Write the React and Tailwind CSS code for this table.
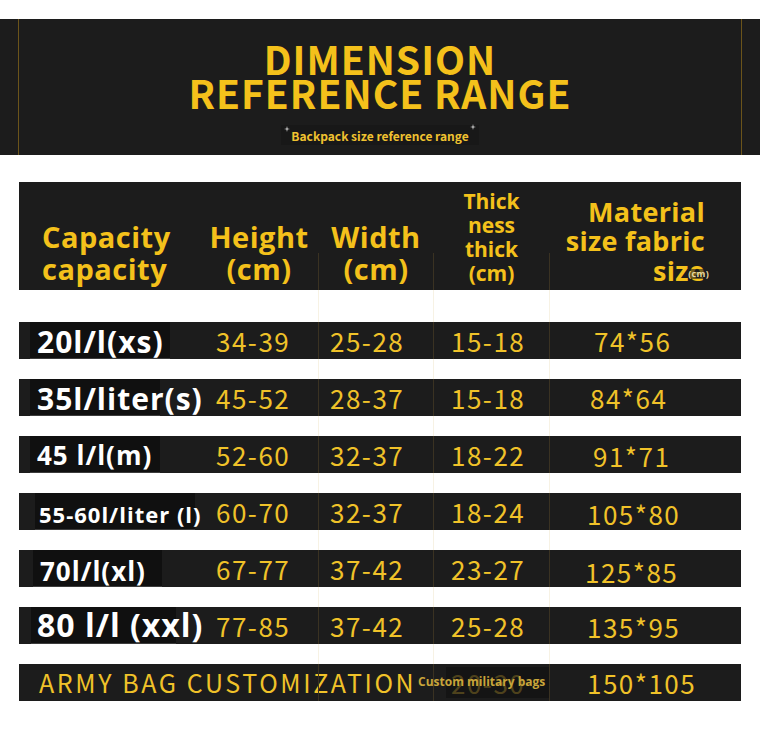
const rows = [
    { label: '20l/l(xs)', text: 'text-[30px]', box: 'ml-[11px] w-[140px]', pad: 'pl-[7px]', dy: 'translate-y-[2px]', h: '34-39', w: '25-28', t: '15-18', m: '74*56', mp: 'pl-[44px]', mdy: '' },
    { label: '35l/liter(s)', text: 'text-[30px]', box: 'ml-[11px] w-[130px]', pad: 'pl-[7px]', dy: 'translate-y-[2px]', h: '45-52', w: '28-37', t: '15-18', m: '84*64', mp: 'pl-[40px]', mdy: '' },
    { label: '45 l/l(m)', text: 'text-[26px]', box: 'ml-[11px] w-[130px]', pad: 'pl-[7px]', dy: 'translate-y-[1px]', h: '52-60', w: '32-37', t: '18-22', m: '91*71', mp: 'pl-[43px]', mdy: 'translate-y-[1px]' },
    { label: '55-60l/liter (l)', text: 'text-[22px]', box: 'ml-[16px] w-[160px]', pad: 'pl-[4px]', dy: 'translate-y-[3px]', h: '60-70', w: '32-37', t: '18-24', m: '105*80', mp: 'pl-[37px]', mdy: 'translate-y-[2px]' },
    { label: '70l/l(xl)', text: 'text-[26px]', box: 'ml-[14px] w-[129px]', pad: 'pl-[7px]', dy: 'translate-y-[3px]', h: '67-77', w: '37-42', t: '23-27', m: '125*85', mp: 'pl-[35px]', mdy: 'translate-y-[3px]' },
    { label: '80 l/l (xxl)', text: 'text-[32px]', box: 'ml-[12px] w-[145px]', pad: 'pl-[6px]', dy: 'translate-y-[0px]', h: '77-85', w: '37-42', t: '25-28', m: '135*95', mp: 'pl-[37px]', mdy: 'translate-y-[1px]' },
]

const num = "font-['Noto_Sans_CJK_SC',sans-serif] text-[26px] tracking-[1.5px] text-[#f0c229] whitespace-nowrap"
const open = "font-['Open_Sans',sans-serif] font-bold"

function Spacer({ h }) {
    return (
        <div className={`flex ${h}`}>
            <div className="w-[299px]" />
            <div className="w-[115px] border-l border-[#f7f2e4]" />
            <div className="w-[116px] border-l border-[#f7f2e4]" />
            <div className="w-[192px] border-l border-[#f7f2e4]" />
        </div>
    )
}

function Sparkle({ className }) {
    return (
        <svg viewBox="0 0 10 10" className={className}>
            <path d="M5 0 L6 4 L10 5 L6 6 L5 10 L4 6 L0 5 L4 4 Z" fill="#cfcfcf" />
        </svg>
    )
}

export default function App() {
    return (
        <div className="w-[760px] h-[729px] overflow-hidden bg-white pt-[19px]">
            {/* Title band */}
            <div className="h-[136px] bg-[#1c1c1c] px-[18px]">
                <div className="h-full border-x border-[#6b541a] flex flex-col items-center pt-[22px]">
                    <h1 className="font-['Noto_Sans_CJK_SC',sans-serif] font-bold text-[39px] leading-[34px] tracking-[1px] text-[#f4c11b] text-center">
                        <span className="block">DIMENSION</span>
                        <span className="block">REFERENCE RANGE</span>
                    </h1>
                    <div className="mt-[16px] flex items-start gap-[1px] bg-[#181818] px-[3px]">
                        <Sparkle className="w-[6px] h-[6px] mt-[1px]" />
                        <span className="font-['Noto_Sans_CJK_SC',sans-serif] font-bold text-[12px] leading-[18px] text-[#f0c230] pt-[2px]">
                            Backpack size reference range
                        </span>
                        <Sparkle className="w-[6px] h-[6px] -mt-[1px]" />
                    </div>
                </div>
            </div>

            <div className="mt-[27px] ml-[19px] w-[722px]">
                {/* Table header */}
                <div className={`h-[108px] bg-[#1c1c1c] flex text-[#f4c11b] ${open}`}>
                    <div className="w-[181px] flex items-end pb-[5px] pl-[23px]">
                        <div className="text-[29px] leading-[32px] tracking-[0.5px]">Capacity<br />capacity</div>
                    </div>
                    <div className="w-[118px] flex items-end justify-center pb-[5px]">
                        <div className="text-[29px] leading-[32px] tracking-[0.5px] text-center">Height<br />(cm)</div>
                    </div>
                    <div className="w-[115px] flex">
                        <div className="w-px h-[37px] self-end bg-[#3a3222]" />
                        <div className="flex-1 flex items-end justify-center pb-[5px]">
                            <div className="text-[29px] leading-[32px] tracking-[0.5px] text-center">Width<br />(cm)</div>
                        </div>
                    </div>
                    <div className="w-[116px] flex">
                        <div className="w-px h-[37px] self-end bg-[#3a3222]" />
                        <div className="flex-1 flex items-end justify-center pb-[5px]">
                            <div className="text-[21px] leading-[24px] text-center">Thick<br />ness<br />thick<br />(cm)</div>
                        </div>
                    </div>
                    <div className="w-[192px] flex">
                        <div className="w-px h-[37px] self-end bg-[#3a3222]" />
                        <div className="flex-1 flex items-end justify-end pr-[36px] pb-[5px]">
                            <div className="relative text-[27px] leading-[29.5px] tracking-[0.3px] text-right">
                                Material<br />size fabric<br />size
                                <span className="absolute right-[-4px] bottom-[6px] text-[9px] leading-[10px] text-[#e8d9a0] bg-[#1c1c1c]/60">(cm)</span>
                            </div>
                        </div>
                    </div>
                </div>

                <Spacer h="h-[32px]" />

                {rows.map((r) => (
                    <div key={r.label}>
                        <div className="h-[37px] bg-[#1c1c1c] flex">
                            <div className="w-[181px] h-full flex">
                                <div className={`${r.box} h-full bg-[#101010] border-b border-[#3c3c3c] flex items-center`}>
                                    <span className={`${open} ${r.text} ${r.pad} ${r.dy} tracking-[1px] text-white whitespace-nowrap leading-none`}>
                                        {r.label}
                                    </span>
                                </div>
                            </div>
                            <div className="w-[118px] h-full flex items-center pl-[16px]">
                                <span className={num}>{r.h}</span>
                            </div>
                            <div className="w-[115px] h-full flex items-center border-l border-[#3a3222] pl-[11px]">
                                <span className={num}>{r.w}</span>
                            </div>
                            <div className="w-[116px] h-full flex items-center border-l border-[#3a3222] pl-[17px]">
                                <span className={num}>{r.t}</span>
                            </div>
                            <div className={`w-[192px] h-full flex items-center border-l border-[#3a3222] ${r.mp}`}>
                                <span className={`${num} ${r.mdy}`}>{r.m}</span>
                            </div>
                        </div>
                        <Spacer h="h-[20px]" />
                    </div>
                ))}

                {/* Customization row */}
                <div className="h-[37px] bg-[#1c1c1c] flex">
                    <div className="w-[299px] h-full flex items-center pl-[20px]">
                        <span className="font-['Noto_Sans_CJK_SC',sans-serif] text-[25px] tracking-[2.6px] text-[#f0c229] whitespace-nowrap">
                            ARMY BAG CUSTOMIZATION
                        </span>
                    </div>
                    <div className="w-[115px] h-full border-l border-[#3a3222]" />
                    <div className="relative w-[116px] h-full flex items-center border-l border-[#3a3222]">
                        <div className="ml-[12px] h-[31px] w-[104px] bg-[#141414] flex items-center pl-[5px]">
                            <span className="font-['Noto_Sans_CJK_SC',sans-serif] text-[26px] tracking-[1.5px] text-[#4e421c]">20-30</span>
                        </div>
                        <span className={`absolute left-[-16px] top-[11px] ${open} text-[12px] leading-[14px] text-[#c8a53a] whitespace-nowrap`}>
                            Custom military bags
                        </span>
                    </div>
                    <div className="w-[192px] h-full flex items-center border-l border-[#3a3222] pl-[37px]">
                        <span className={num}>150*105</span>
                    </div>
                </div>
            </div>
        </div>
    )
}
